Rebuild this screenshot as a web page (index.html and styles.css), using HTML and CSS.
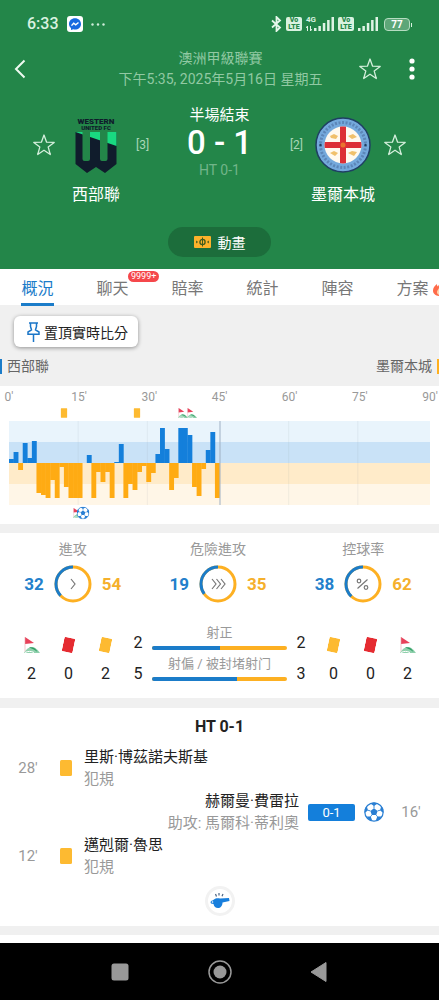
FILE: index.html
```
<!DOCTYPE html>
<html lang="zh-Hant">
  <head>
    <meta charset="UTF-8" />
    <meta name="viewport" content="width=device-width, initial-scale=1.0" />
    <title>西部聯 0 - 1 墨爾本城</title>
    <link rel="stylesheet" href="styles.css">
  </head>
  <body>
    <!-- shared icons -->
    <svg class="sprite" aria-hidden="true">
      <symbol id="star" viewBox="0 0 24 24">
        <path d="M12 2l2.600 7.200 7.600.2-6 4.700 2.100 7.400L12 17.200l-6.300 4.300 2.100-7.400-6-4.700 7.600-.2z" fill="none" stroke="#d4efdc" stroke-width="1.300" stroke-linejoin="round" />
      </symbol>
      <symbol id="card" viewBox="0 0 12 16">
        <rect width="12" height="16" rx="1.500" fill="currentColor" />
      </symbol>
      <symbol id="corner" viewBox="0 0 16 16">
        <path d="M1 0l9 6-9 1z" fill="#e8415a" />
        <path d="M1 0v15" stroke="#e7a3a8" stroke-width=".6" />
        <path d="M0 16c2-4 5-6 8-6s6 3 8 6z" fill="#8fd0ac" />
        <path d="M5 10.500c4-1 7 1 8.500 4.500-2-2-5-3-8.500-4.500z" fill="#2f9d63" />
        <path d="M1 15.500c3-1.500 6-1.500 9 0" stroke="#fff" fill="none" />
      </symbol>
      <symbol id="ball" viewBox="0 0 20 20">
        <circle cx="10" cy="10" r="9.200" fill="#fff" stroke="#2a7fd3" stroke-width="1.200" />
        <path d="M10 6.300l3.600 2.600-1.400 4.200H7.800L6.400 8.900zM6 1.300L10 4l4-2.700L10 .6zM17.300 4l-1.300 4.200 3.200 2.900.2-4zM17.600 14.500l-4.300.1-1.700 4.300 3.800-1.200zM8.400 18.900l-1.700-4.300-4.300-.1 2.500 3.200zM.8 11.100L4 8.200 2.700 4 .7 7.300z" fill="#2a7fd3" />
        <path d="M10 6.300V3.400M13.600 8.900l2.600-.7M12.200 13.100l1.400 1.700M7.800 13.100l-1.400 1.700M6.400 8.900l-2.600-.7" stroke="#2a7fd3" stroke-width=".9" />
      </symbol>
      <symbol id="signal" viewBox="0 0 20 14">
        <path d="M0 11h2.500v3H0zM4.400 9h2.500v5H4.400zM8.800 6h2.500v8H8.800zM13.100 3h2.500v11h-2.500zM17.500 0H20v14h-2.500z" fill="#dff3e5" />
      </symbol>
    </svg>

    <header class="match">
      <div class="status">
        <span class="clock">6:33</span>
        <svg width="16" height="16" viewBox="0 0 16 16">
          <rect width="16" height="16" rx="3" fill="#fff" />
          <path d="M8 2.300c3.400 0 6 2.400 6 5.600s-2.600 5.600-6 5.600c-.6 0-1.200-.1-1.700-.2L4 14v-2c-1.200-1-2-2.500-2-4.100 0-3.200 2.600-5.600 6-5.600z" fill="#1769e0" />
          <path d="M4.500 9.600l2.200-2.400 2 1.600 2.800-2.300" fill="none" stroke="#fff" stroke-width="1.400" />
        </svg>
        <svg width="14" height="3" viewBox="0 0 14 3" fill="#cfeeda">
          <circle cx="1.500" cy="1.500" r="1.200" /><circle cx="7" cy="1.500" r="1.200" /><circle cx="12.500" cy="1.500" r="1.200" />
        </svg>
        <div class="status-right">
          <svg width="11" height="16" viewBox="0 0 11 16">
            <path d="M1 4.500l8 7L5.500 15V1L9 4.500l-8 7" fill="none" stroke="#e6f7eb" stroke-width="1.800" />
          </svg>
          <span class="volte">Vo<br />LTE</span>
          <div class="mobile">
            <span class="net">4G</span>
            <svg class="arrows" width="6" height="5" viewBox="0 0 6 5"><path d="M1.500 5V0L0 2M4.500 0v5L6 3" fill="none" stroke="#dff3e5" /></svg>
            <svg width="20" height="14"><use href="#signal" /></svg>
          </div>
          <span class="volte">Vo<br />LTE</span>
          <svg width="20" height="14"><use href="#signal" /></svg>
          <span class="battery">77</span>
        </div>
      </div>

      <div class="topbar">
        <button class="icon-btn" aria-label="返回">
          <svg width="12" height="20" viewBox="0 0 12 20"><path d="M10.500 1.500L2 10l8.500 8.500" fill="none" stroke="#eefaf1" stroke-width="2" /></svg>
        </button>
        <div class="league">
          <div>澳洲甲級聯賽</div>
          <div>下午5:35, 2025年5月16日 星期五</div>
        </div>
        <button class="icon-btn" aria-label="收藏"><svg width="24" height="24"><use href="#star" /></svg></button>
        <button class="icon-btn" aria-label="更多">
          <svg width="6" height="22" viewBox="0 0 6 22" fill="#fff"><circle cx="3" cy="3" r="2.600" /><circle cx="3" cy="11" r="2.600" /><circle cx="3" cy="19" r="2.600" /></svg>
        </button>
      </div>

      <div class="teams">
        <div class="team">
          <button class="icon-btn" aria-label="收藏西部聯"><svg width="24" height="24"><use href="#star" /></svg></button>
          <div class="crest">
            <svg width="56" height="56" viewBox="0 0 56 56">
              <text x="28" y="7" class="crest-text" text-anchor="middle">WESTERN</text>
              <text x="28" y="13" class="crest-sub" text-anchor="middle">UNITED FC</text>
              <path d="M7.500 15h41v32L37 56l-9-6-9 6L7.500 47z" fill="#101c2c" />
              <path d="M7.500 15h41v14z" fill="#19d981" />
              <path d="M14.500 15H22v27q0 2-2 2h-3.500q-2 0-2-2zM32 15h7.500v27q0 2-2 2H34q-2 0-2-2z" fill="#238649" />
            </svg>
            <span>西部聯</span>
          </div>
          <span class="rank">[3]</span>
        </div>
        <div class="result">
          <div class="state">半場結束</div>
          <div class="score">0 - 1</div>
          <div class="half">HT 0-1</div>
        </div>
        <div class="team away">
          <button class="icon-btn" aria-label="收藏墨爾本城"><svg width="24" height="24"><use href="#star" /></svg></button>
          <div class="crest">
            <svg width="56" height="56" viewBox="0 0 56 56">
              <defs>
                <clipPath id="inner"><circle cx="28" cy="28" r="18.500" /></clipPath>
              </defs>
              <circle cx="28" cy="28" r="27" fill="#74a9dc" stroke="#1f3f63" stroke-width="1.500" />
              <circle cx="28" cy="28" r="22.500" fill="none" stroke="#5c86b8" stroke-width="3" stroke-dasharray="2 1.600" />
              <circle cx="28" cy="28" r="18.500" fill="#fff9ef" />
              <g clip-path="url(#inner)" fill="#dc2f36"><path d="M25 8h6v40h-6zM8 25h40v6H8z" /></g>
              <path d="M15 19l4-2 4 2-2 3-5-1zM33 19l5-2 4 3-5 2zM15 36l4-2 4 2-3 3zM33 36l4-2 5 1-3 4z" fill="#f0c06c" />
              <circle cx="28" cy="28" r="2.500" fill="#e9752f" />
              <circle cx="5.500" cy="28" r="1.200" fill="#1f3f63" /><circle cx="50.500" cy="28" r="1.200" fill="#1f3f63" />
            </svg>
            <span>墨爾本城</span>
          </div>
          <span class="rank">[2]</span>
        </div>
      </div>

      <button class="animation">
        <svg width="17" height="12" viewBox="0 0 17 12">
          <rect width="17" height="12" rx="1" fill="#fdb22b" />
          <path d="M8.500 1.500v9M2 5l1.500 1L2 7M15 5l-1.500 1L15 7" stroke="#3f5a1d" fill="none" />
          <circle cx="8.500" cy="6" r="2.600" stroke="#3f5a1d" stroke-width="1.300" fill="none" />
        </svg>
        動畫
      </button>
    </header>

    <nav class="tabs">
      <a href="#" class="tab active">概況</a>
      <a href="#" class="tab">聊天<span class="count">9999+</span></a>
      <a href="#" class="tab">賠率</a>
      <a href="#" class="tab">統計</a>
      <a href="#" class="tab">陣容</a>
      <a href="#" class="tab">方案<svg class="fire" width="14" height="16" viewBox="0 0 14 16"><path d="M8 0c.5 3-2 4-3 6.500C4 6 4 5 4 4 1.500 6 0 8 0 10.500 0 14 3 16 7 16s7-2 7-6C14 6 11 4 8 0z" fill="#ff6b4a" /><path d="M7 15c-2 0-3-1.500-3-3s1.500-2.500 2-4c2 1 4 2.500 4 4s-1 3-3 3z" fill="#ffd8b0" /></svg></a>
    </nav>

    <section class="pin-area">
      <button class="pin">
        <svg width="13" height="20" viewBox="0 0 13 20"><path d="M2 1h9M3.500 1v3.500L4.500 8 1 10v2.200h11V10L8.500 8l1-3.500V1M6.500 12.500V20" fill="none" stroke="#1b76c8" stroke-width="1.500" /></svg>
        置頂實時比分
      </button>
      <div class="legend">
        <span>西部聯</span>
        <span>墨爾本城</span>
      </div>
    </section>

    <section class="timeline">
      <div class="axis">
        <span>0'</span><span>15'</span><span>30'</span><span>45'</span><span>60'</span><span>75'</span><span>90'</span>
      </div>
      <div class="marks">
        <svg class="yellow" style="left: 13.100%" width="7" height="10"><use href="#card" /></svg>
        <svg class="yellow" style="left: 30.500%" width="7" height="10"><use href="#card" /></svg>
        <svg style="left: 41.300%" width="10" height="10"><use href="#corner" /></svg>
        <svg style="left: 43.500%" width="10" height="10"><use href="#corner" /></svg>
      </div>
      <svg id="pressure" class="pressure" viewBox="0 0 420 84" preserveAspectRatio="none">
        <rect width="420" height="21" fill="#e9f4fc" />
        <rect y="21" width="420" height="21" fill="#c9e2f7" />
        <rect y="42" width="420" height="21" fill="#ffebc9" />
        <rect y="63" width="420" height="21" fill="#fff6e7" />
        <path d="M69 0v84M138 0v84M279 0v84M348 0v84" stroke="#8a99a8" stroke-opacity=".12" />
      </svg>
      <div class="marks">
        <svg style="left: 16.300%" width="10" height="10"><use href="#corner" /></svg>
        <svg style="left: 17.500%" width="13" height="13"><use href="#ball" /></svg>
      </div>
    </section>

    <section class="stats">
      <div class="rings">
        <div class="ring-box">
          <div class="label">進攻</div>
          <div class="ring-row">
            <b class="home">32</b>
            <svg width="38" height="38" viewBox="0 0 38 38">
              <circle class="ring" cx="19" cy="19" r="17" />
              <circle class="ring-home" cx="19" cy="19" r="17" pathLength="100" stroke-dasharray="37 63" />
              <path class="glyph" d="M17 14l4 5-4 5" />
            </svg>
            <b class="guest">54</b>
          </div>
        </div>
        <div class="ring-box">
          <div class="label">危險進攻</div>
          <div class="ring-row">
            <b class="home">19</b>
            <svg width="38" height="38" viewBox="0 0 38 38">
              <circle class="ring" cx="19" cy="19" r="17" />
              <circle class="ring-home" cx="19" cy="19" r="17" pathLength="100" stroke-dasharray="35 65" />
              <path class="glyph" d="M13 14l4 5-4 5M17.500 14l4 5-4 5M22 14l4 5-4 5" />
            </svg>
            <b class="guest">35</b>
          </div>
        </div>
        <div class="ring-box">
          <div class="label">控球率</div>
          <div class="ring-row">
            <b class="home">38</b>
            <svg width="38" height="38" viewBox="0 0 38 38">
              <circle class="ring" cx="19" cy="19" r="17" />
              <circle class="ring-home" cx="19" cy="19" r="17" pathLength="100" stroke-dasharray="38 62" />
              <path class="glyph" d="M23.500 14.500l-10 9" />
              <circle class="glyph" cx="15" cy="16" r="1.800" /><circle class="glyph" cx="22" cy="22.500" r="1.800" />
            </svg>
            <b class="guest">62</b>
          </div>
        </div>
      </div>

      <div class="totals">
        <div class="total"><svg width="16" height="16"><use href="#corner" /></svg>2</div>
        <div class="total red"><svg class="tilt" width="11" height="15" viewBox="0 0 12 16"><use href="#card" /></svg>0</div>
        <div class="total yellow"><svg class="tilt" width="11" height="15" viewBox="0 0 12 16"><use href="#card" /></svg>2</div>
        <div class="shots">
          <span class="num">2</span>
          <div class="shot"><span>射正</span><div class="bar"><i style="width: 50%"></i></div></div>
          <span class="num">2</span>
          <span class="num">5</span>
          <div class="shot"><span>射偏 / 被封堵射门</span><div class="bar"><i style="width: 63%"></i></div></div>
          <span class="num">3</span>
        </div>
        <div class="total yellow"><svg class="tilt" width="11" height="15" viewBox="0 0 12 16"><use href="#card" /></svg>0</div>
        <div class="total red"><svg class="tilt" width="11" height="15" viewBox="0 0 12 16"><use href="#card" /></svg>0</div>
        <div class="total"><svg width="16" height="16"><use href="#corner" /></svg>2</div>
      </div>
    </section>

    <section class="events">
      <h2>HT 0-1</h2>
      <div class="event">
        <span class="time">28'</span>
        <svg class="yellow" width="12" height="16"><use href="#card" /></svg>
        <div class="detail">里斯·博茲諾夫斯基<small>犯規</small></div>
      </div>
      <div class="event guest-event">
        <span class="time">16'</span>
        <svg width="20" height="20"><use href="#ball" /></svg>
        <span class="goal">0-1</span>
        <div class="detail">赫爾曼·費雷拉<small>助攻: 馬爾科·蒂利奧</small></div>
      </div>
      <div class="event">
        <span class="time">12'</span>
        <svg class="yellow" width="12" height="16"><use href="#card" /></svg>
        <div class="detail">邁剋爾·魯思<small>犯規</small></div>
      </div>
      <div class="whistle">
        <svg width="20" height="16" viewBox="0 0 20 16">
          <path d="M4 6.500C5.500 5 8 5 10 5.500l9-.5.500 3-7 1.500C12.500 13 10.500 15 8 15c-2.500 0-4-1.500-4.500-4L1 10.500C0 9 1 7.500 2.500 7.500z" fill="#187fdd" />
          <path d="M5.500 1l1 2.500M9 0v2.500M13 1l-1 2.300" stroke="#4a6484" stroke-width="1.200" />
          <circle cx="2.500" cy="9" r=".8" fill="#fff" />
        </svg>
      </div>
    </section>

    <section class="next"></section>

    <footer class="sysnav">
      <button class="icon-btn" aria-label="最近"><svg width="24" height="24" viewBox="0 0 24 24"><rect x="3.500" y="3.500" width="17" height="17" rx="2.500" fill="#999" /></svg></button>
      <button class="icon-btn" aria-label="主頁"><svg width="24" height="24" viewBox="0 0 24 24"><circle cx="12" cy="12" r="11" fill="none" stroke="#999" stroke-width="1.500" /><circle cx="12" cy="12" r="6.500" fill="#999" /></svg></button>
      <button class="icon-btn" aria-label="返回上頁"><svg width="24" height="24" viewBox="0 0 24 24"><path d="M3 12L18 2.500v19z" fill="#999" stroke="#999" stroke-linejoin="round" /></svg></button>
    </footer>

    <script>
      // 每分鐘壓力值：正數為主隊，負數為客隊
      const pressure = [
        4, 11, -7, 20, 5, 22, -30, -32, -35, -17, -35, -4, -24, -35, -35, -35,
        0, 8, -35, -9, -19, -9, -35, 1, 19, -35, -21, -27, -9, -3, -19, -10, 9,
        35, 14, -27, -15, 35, 35, 28, -24, -33, -6, 13, 31, -35,
      ];
      const chart = document.getElementById("pressure");
      const ns = "http://www.w3.org/2000/svg";
      const step = 210 / pressure.length;

      pressure.forEach((value, i) => {
        const bar = document.createElementNS(ns, "rect");
        bar.setAttribute("x", i * step);
        bar.setAttribute("y", value > 0 ? 42 - value : 42);
        bar.setAttribute("width", step + 0.3);
        bar.setAttribute("height", Math.abs(value));
        bar.setAttribute("fill", value > 0 ? "#147fdb" : "#ffab13");
        chart.appendChild(bar);
      });

      // 目前時間
      const now = document.createElementNS(ns, "path");
      now.setAttribute("d", "M210.5 0v84");
      now.setAttribute("stroke", "#9fb0c3");
      chart.appendChild(now);
    </script>
  </body>
</html>
```
FILE: styles.css
```
* {
  box-sizing: border-box;
}
body {
  display: flex;
  flex-direction: column;
  min-height: 100vh;
  margin: 0;
  background-color: #f0f0f0;
  color: #222;
  font-family: Roboto, "Noto Sans CJK TC", sans-serif;
  font-size: 16px;
  overflow-x: hidden;
}
svg {
  display: block;
  flex: none;
}
button {
  font-family: inherit;
  border: none;
  cursor: pointer;
}
.sprite {
  position: absolute;
  width: 0;
  height: 0;
}
.icon-btn {
  display: flex;
  align-items: center;
  justify-content: center;
  padding: 0;
  background: none;
}
.yellow svg,
svg.yellow {
  color: #fdba31;
}
.red svg {
  color: #e52b31;
}

/* header */
.match {
  padding-bottom: 12px;
  background-color: #238649;
  color: #fff;
}
.status {
  display: flex;
  align-items: center;
  gap: 8px;
  height: 48px;
  padding: 0 26px 0 27px;
}
.clock {
  font-size: 16px;
  font-weight: 500;
  line-height: 20px;
  color: #d9f2e0;
}
.status-right {
  display: flex;
  align-items: center;
  gap: 4px;
  margin-left: auto;
}
.volte {
  width: 16px;
  height: 14px;
  border-radius: 2px;
  background-color: #d9f2e0;
  color: #238649;
  font-size: 7px;
  font-weight: 900;
  line-height: 7px;
  text-align: center;
}
.mobile {
  position: relative;
  padding-left: 8px;
}
.net {
  position: absolute;
  left: 0;
  top: -1px;
  font-size: 8px;
  font-weight: 700;
  line-height: 8px;
  color: #d9f2e0;
}
.arrows {
  position: absolute;
  left: 0;
  bottom: 0;
}
.battery {
  position: relative;
  width: 26px;
  height: 13px;
  margin: 0 3px 0 2px;
  border: 1px solid #b5dcc1;
  border-radius: 4px;
  background-color: #5da678;
  font-size: 10px;
  font-weight: 700;
  line-height: 12px;
  text-align: center;
}
.battery::after {
  content: "";
  position: absolute;
  right: -3px;
  top: 4px;
  width: 1px;
  height: 4px;
  background-color: #d9f2e0;
}
.topbar {
  display: flex;
  align-items: center;
  height: 42px;
  padding: 0 24px 0 14px;
}
.topbar .icon-btn:last-child {
  margin-left: 27px;
}
.league {
  flex: 1;
  padding-left: 57px;
  text-align: center;
  font-size: 14px;
  line-height: 21px;
  color: #91c9a3;
  white-space: nowrap;
}
.teams {
  display: flex;
  justify-content: space-between;
  padding: 14px 32px 0;
}
.team {
  display: flex;
  align-items: flex-start;
  gap: 4px;
  line-height: 56px;
}
.team.away {
  flex-direction: row-reverse;
}
.team .icon-btn,
.rank {
  height: 56px;
  margin-top: 13px;
}
.rank {
  font-size: 12px;
  color: #a9d6b7;
}
.crest {
  display: flex;
  flex-direction: column;
  align-items: center;
  gap: 10px;
  width: 72px;
  padding-top: 13px;
  font-size: 16px;
  line-height: 24px;
}
.crest-text {
  font-size: 8px;
  font-weight: 900;
  fill: #0f1b2b;
}
.crest-sub {
  font-size: 6px;
  font-weight: 900;
  fill: #0f1b2b;
}
.result {
  text-align: center;
}
.state {
  font-size: 15px;
  line-height: 22px;
}
.score {
  font-size: 33px;
  font-weight: 500;
  line-height: 34px;
}
.half {
  font-size: 14px;
  line-height: 20px;
  color: #72b58a;
}
.animation {
  display: flex;
  align-items: center;
  justify-content: center;
  gap: 7px;
  width: 103px;
  height: 30px;
  margin: 20px auto 0;
  padding: 0;
  border-radius: 15px;
  background-color: #1c6d3b;
  color: #fff;
  font-size: 14px;
}

/* tabs */
.tabs {
  display: flex;
  height: 36px;
  background-color: #fff;
  overflow-x: clip;
}
.tab {
  position: relative;
  flex: 0 0 75px;
  font-size: 16px;
  line-height: 40px;
  text-align: center;
  text-decoration: none;
  color: #777;
}
.tab.active {
  color: #1b7cc9;
}
.tab.active::after {
  content: "";
  position: absolute;
  left: 21px;
  right: 21px;
  top: 34px;
  height: 3px;
  background-color: #1b7cc9;
}
.count {
  position: absolute;
  left: 53px;
  top: 2px;
  padding: 0 3px;
  border-radius: 6px;
  background-color: #f5474b;
  color: #fff;
  font-size: 9px;
  line-height: 11px;
}
.fire {
  position: absolute;
  left: 58px;
  top: 11px;
}
.pin-area {
  padding-top: 11px;
}
.pin {
  display: flex;
  align-items: center;
  gap: 4px;
  height: 31px;
  margin-left: 14px;
  padding: 0 10px 0 13px;
  border-radius: 6px;
  background-color: #fff;
  box-shadow: 0 1px 4px rgba(0, 0, 0, 0.4);
  color: #222;
  font-size: 14px;
}
.legend {
  display: flex;
  justify-content: space-between;
  padding: 12px 0;
  font-size: 14px;
  line-height: 15px;
  color: #666;
}
.legend span {
  padding: 0 5px;
  border-left: 2px solid #1b7cc9;
}
.legend span:last-child {
  border-left: none;
  border-right: 2px solid #ffb01f;
}

/* timeline */
.timeline {
  padding: 3px 9px;
  background-color: #fff;
}
.axis {
  display: flex;
  justify-content: space-between;
  margin: 0 -10px;
  font-size: 12px;
  line-height: 16px;
  color: #999;
}
.axis span {
  width: 20px;
  text-align: center;
}
.marks {
  position: relative;
  height: 16px;
}
.marks svg {
  position: absolute;
  top: 50%;
  transform: translate(-50%, -50%);
}
.pressure {
  width: 100%;
  height: 84px;
}
.stats {
  margin-top: 9px;
  padding: 5px 0 13px;
  background-color: #fff;
}
.rings {
  display: flex;
  padding-right: 3px;
}
.ring-box {
  flex: 1;
}
.label {
  font-size: 14px;
  line-height: 22px;
  text-align: center;
  color: #999;
}
.ring-row {
  display: flex;
  align-items: center;
  justify-content: center;
  gap: 10px;
  margin-top: 5px;
  font-size: 17px;
}
.home {
  color: #2380cb;
}
.guest {
  color: #f5b02c;
}
.ring,
.ring-home {
  fill: none;
  stroke: #fdb022;
  stroke-width: 3;
}
.ring-home {
  stroke: #1b7cc9;
  transform: rotate(-90deg) scaleY(-1);
  transform-origin: center;
}
.glyph {
  fill: none;
  stroke: #777;
  stroke-width: 1.2;
}
.totals {
  display: flex;
  padding: 20px 13px 0;
}
.total {
  display: flex;
  flex-direction: column;
  align-items: center;
  gap: 11px;
  width: 37px;
  padding-top: 14px;
  line-height: 20px;
}
.total svg {
  height: 16px;
}
.tilt {
  transform: rotate(12deg);
}
.shots {
  flex: 1;
  display: grid;
  grid-template-columns: 28px 1fr 28px;
}
.num {
  padding-top: 10px;
  line-height: 20px;
  text-align: center;
}
.shot {
  height: 31px;
  text-align: center;
  font-size: 13px;
  line-height: 20px;
  color: #999;
}
.bar {
  height: 4px;
  margin-top: 3px;
  border-radius: 2px;
  background-color: #fdb022;
  overflow: hidden;
}
.bar i {
  display: block;
  height: 4px;
  background-color: #1b7cc9;
}

/* events */
.events {
  margin-top: 10px;
  padding: 9px 0 10px;
  background-color: #fff;
}
.events h2 {
  margin: 0 0 9px;
  font-size: 16px;
  line-height: 20px;
  text-align: center;
}
.event {
  display: flex;
  align-items: center;
  height: 44px;
  padding-left: 10px;
}
.guest-event {
  flex-direction: row-reverse;
  padding: 0 10px 0 0;
}
.time {
  width: 36px;
  font-size: 15px;
  text-align: center;
  color: #999;
}
.event svg {
  margin: 0 12px 0 14px;
}
.guest-event svg {
  margin: 0 9px;
}
.detail {
  font-size: 15px;
  line-height: 22px;
}
.detail small {
  display: block;
  font-size: 15px;
  color: #999;
}
.goal {
  width: 47px;
  border-radius: 2px;
  background-color: #147fdb;
  color: #fff;
  font-size: 13px;
  line-height: 17px;
  text-align: center;
}
.guest-event .detail {
  margin-right: 9px;
  text-align: right;
}
.whistle {
  display: flex;
  align-items: center;
  justify-content: center;
  width: 30px;
  height: 30px;
  margin: 8px auto 0;
  border: 3px solid #f2f2f2;
  border-radius: 50%;
}
.next {
  flex: 1;
  min-height: 6px;
  margin-top: 9px;
  background-color: #fff;
}
.sysnav {
  display: flex;
  align-items: center;
  justify-content: center;
  gap: 76px;
  height: 57px;
  background-color: #000;
}
```
